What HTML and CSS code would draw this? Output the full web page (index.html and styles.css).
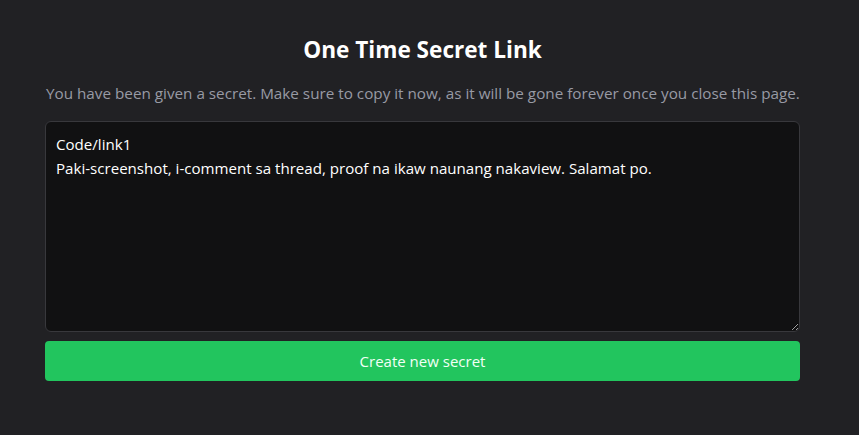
FILE: index.html
```html
<!DOCTYPE html>
<html>
<head>
<meta charset="utf-8">
<link rel="stylesheet" href="styles.css">
</head>
<body>
<main class="page">
  <h1 class="title">One Time Secret Link</h1>
  <p class="subtitle">You have been given a secret. Make sure to copy it now, as it will be gone forever once you close this page.</p>
  <textarea class="secret" readonly>Code/link1
Paki-screenshot, i-comment sa thread, proof na ikaw naunang nakaview. Salamat po.</textarea>
  <button class="btn">Create new secret</button>
</main>
</body>
</html>
```
FILE: styles.css
```css
html, body {
  margin: 0;
  background: #212124;
  font-family: "Open Sans", sans-serif;
}
.page {
  width: 755px;
  margin-left: 45px;
  padding-top: 33px;
  display: flex;
  flex-direction: column;
}
.title {
  margin: 0;
  text-align: center;
  color: #ffffff;
  font-size: 22.6px;
  font-weight: 700;
  line-height: 34px;
}
.subtitle {
  margin: 14px 0 0 1px;
  color: #989aa4;
  font-size: 15.25px;
  line-height: 24px;
  white-space: nowrap;
}
.secret {
  margin-top: 16px;
  height: 211px;
  box-sizing: border-box;
  background: #111112;
  border: 1px solid #38383c;
  border-radius: 6px;
  color: #ffffff;
  font-family: "Open Sans", sans-serif;
  font-size: 15.1px;
  line-height: 24px;
  padding: 10px 10px;
  resize: vertical;
  outline: none;
}
.btn {
  margin-top: 9px;
  height: 40px;
  border: none;
  border-radius: 4px;
  background: #22c55e;
  color: #f2fff6;
  font-family: "Open Sans", sans-serif;
  font-size: 15px;
}
```
